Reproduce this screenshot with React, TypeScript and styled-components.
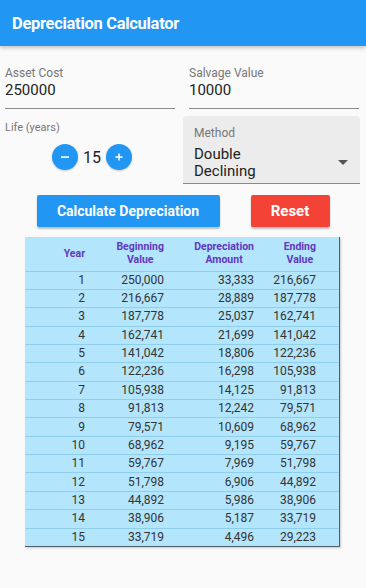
import React from "react";
import styled, { createGlobalStyle } from "styled-components";

const GlobalStyle = createGlobalStyle`
  html, body { margin: 0; padding: 0; background: #fafafa; }
  body { font-family: Roboto, "Noto Sans", Arial, sans-serif; color: #222; }
  * { box-sizing: border-box; }
`;

const Page = styled.div`
  width: 366px;
  min-height: 588px;
  background: #fafafa;
`;

const AppBar = styled.header`
  height: 46px;
  background: #2196f3;
  display: flex;
  align-items: center;
  padding-left: 12px;
  box-shadow: 0 2px 4px rgba(0, 0, 0, 0.22);
  position: relative;
  z-index: 1;
`;

const Title = styled.h1`
  margin: 0;
  font-size: 16.5px;
  font-weight: 700;
  color: #fff;
  letter-spacing: -0.3px;
`;

const FieldRow = styled.div`
  display: grid;
  grid-template-columns: 170px 170px;
  column-gap: 14px;
  padding: 0 7px 0 5px;
  margin-top: 20px;
`;

const Field = styled.div`
  display: flex;
  flex-direction: column;
  border-bottom: 1px solid #8a8a8a;
  padding-bottom: 8px;
`;

const Label = styled.span<{ $size?: number }>`
  font-size: ${(p) => p.$size ?? 12}px;
  line-height: 14px;
  color: #777;
`;

const Value = styled.span`
  font-size: 15px;
  line-height: 20px;
  color: #222;
`;

const SecondRow = styled.div`
  display: grid;
  grid-template-columns: 178px 177px;
  padding-left: 5px;
  margin-top: 7px;
`;

const LifeColumn = styled.div`
  display: flex;
  flex-direction: column;
  padding-top: 5px;
`;

const Stepper = styled.div`
  display: flex;
  align-items: center;
  justify-content: center;
  gap: 5px;
  margin-top: 9px;
  padding-right: 4px;
`;

const RoundButton = styled.button`
  width: 26px;
  height: 26px;
  border-radius: 50%;
  border: none;
  background: #2196f3;
  display: flex;
  align-items: center;
  justify-content: center;
  padding: 0;
  box-shadow: 0 1px 2px rgba(0, 0, 0, 0.2);
`;

const Count = styled.span`
  font-size: 16px;
  color: #222;
`;

const SelectBox = styled.div`
  height: 68px;
  background: #ececec;
  border-radius: 4px 4px 0 0;
  border-bottom: 1px solid #8a8a8a;
  padding: 10px 12px 0 11px;
  display: flex;
  align-items: flex-start;
  justify-content: space-between;
`;

const SelectText = styled.div`
  display: flex;
  flex-direction: column;
`;

const SelectValue = styled.span`
  margin-top: 6px;
  font-size: 15px;
  line-height: 17px;
  color: #222;
`;

const Caret = styled.div`
  width: 0;
  height: 0;
  border-left: 5px solid transparent;
  border-right: 5px solid transparent;
  border-top: 5px solid #555;
  margin-top: 34px;
`;

const ButtonRow = styled.div`
  display: flex;
  justify-content: center;
  gap: 31px;
  margin-top: 11px;
`;

const ActionButton = styled.button<{ $color: string; $width: number; $size: number }>`
  width: ${(p) => p.$width}px;
  height: 32px;
  border: none;
  border-radius: 2px;
  background: ${(p) => p.$color};
  color: #fff;
  font-family: Roboto, Arial, sans-serif;
  font-size: ${(p) => p.$size}px;
  font-weight: 700;
  box-shadow: 0 2px 2px rgba(0, 0, 0, 0.24);
  padding: 0;
`;

const Table = styled.div`
  margin: 10px 0 0 25px;
  width: 315px;
  background: #b3e5fc;
  border-right: 1px solid #4f5d68;
  border-bottom: 1px solid #4f5d68;
  box-shadow: 1px 1px 2px rgba(0, 0, 0, 0.2);
`;

const Row = styled.div<{ $header?: boolean }>`
  display: grid;
  grid-template-columns: 60px 79px 90px 62px;
  height: ${(p) => (p.$header ? "33.5px" : "18.37px")};
  align-items: center;
  border-top: ${(p) => (p.$header ? "none" : "1px solid #8fcfec")};
`;

const Cell = styled.div`
  text-align: right;
  font-size: 12px;
  color: #333;
  line-height: 17px;
`;

const HeadCell = styled.div`
  display: flex;
  justify-content: flex-end;
`;

const HeadText = styled.span`
  text-align: center;
  font-size: 10.5px;
  line-height: 12.5px;
  font-weight: 700;
  color: #6237c0;
`;

const rows: [number, string, string, string][] = [
  [1, "250,000", "33,333", "216,667"],
  [2, "216,667", "28,889", "187,778"],
  [3, "187,778", "25,037", "162,741"],
  [4, "162,741", "21,699", "141,042"],
  [5, "141,042", "18,806", "122,236"],
  [6, "122,236", "16,298", "105,938"],
  [7, "105,938", "14,125", "91,813"],
  [8, "91,813", "12,242", "79,571"],
  [9, "79,571", "10,609", "68,962"],
  [10, "68,962", "9,195", "59,767"],
  [11, "59,767", "7,969", "51,798"],
  [12, "51,798", "6,906", "44,892"],
  [13, "44,892", "5,986", "38,906"],
  [14, "38,906", "5,187", "33,719"],
  [15, "33,719", "4,496", "29,223"],
];

export default function App() {
  return (
    <Page>
      <GlobalStyle />
      <AppBar>
        <Title>Depreciation Calculator</Title>
      </AppBar>
      <FieldRow>
        <Field>
          <Label>Asset Cost</Label>
          <Value>250000</Value>
        </Field>
        <Field>
          <Label>Salvage Value</Label>
          <Value>10000</Value>
        </Field>
      </FieldRow>
      <SecondRow>
        <LifeColumn>
          <Label $size={11}>Life (years)</Label>
          <Stepper>
            <RoundButton aria-label="decrease">
              <svg width="10" height="10" viewBox="0 0 10 10">
                <rect x="1" y="4.3" width="8" height="1.6" fill="#fff" />
              </svg>
            </RoundButton>
            <Count>15</Count>
            <RoundButton aria-label="increase">
              <svg width="10" height="10" viewBox="0 0 10 10">
                <rect x="1.5" y="4.3" width="7" height="1.5" fill="#fff" />
                <rect x="4.25" y="1.5" width="1.5" height="7" fill="#fff" />
              </svg>
            </RoundButton>
          </Stepper>
        </LifeColumn>
        <SelectBox>
          <SelectText>
            <Label>Method</Label>
            <SelectValue>
              Double
              <br />
              Declining
            </SelectValue>
          </SelectText>
          <Caret />
        </SelectBox>
      </SecondRow>
      <ButtonRow>
        <ActionButton $color="#2196f3" $width={183} $size={14}>
          Calculate Depreciation
        </ActionButton>
        <ActionButton $color="#f44336" $width={79} $size={15}>
          Reset
        </ActionButton>
      </ButtonRow>
      <Table>
        <Row $header>
          <HeadCell>
            <HeadText>Year</HeadText>
          </HeadCell>
          <HeadCell>
            <HeadText>
              Beginning
              <br />
              Value
            </HeadText>
          </HeadCell>
          <HeadCell>
            <HeadText>
              Depreciation
              <br />
              Amount
            </HeadText>
          </HeadCell>
          <HeadCell>
            <HeadText>
              Ending
              <br />
              Value
            </HeadText>
          </HeadCell>
        </Row>
        {rows.map((r) => (
          <Row key={r[0]}>
            <Cell>{r[0]}</Cell>
            <Cell>{r[1]}</Cell>
            <Cell>{r[2]}</Cell>
            <Cell>{r[3]}</Cell>
          </Row>
        ))}
      </Table>
    </Page>
  );
}
